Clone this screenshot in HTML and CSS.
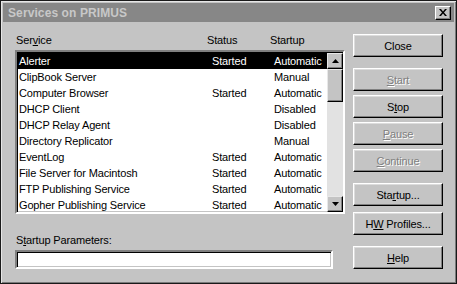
FILE: index.html
```html
<!DOCTYPE html>
<html lang="en">
<head>
  <meta charset="UTF-8">
  <title>Services on PRIMUS</title>
  <link rel="stylesheet" href="styles.css">
</head>
<body>
  <div class="window">
    <div class="titlebar">
      <span class="title">Services on PRIMUS</span>
      <span class="close-box">
        <svg width="8" height="7" viewBox="0 0 8 7">
          <path d="M0 0h2l2 2.5L6 0h2L5 3.5 8 7H6L4 4.5 2 7H0l3-3.5z" fill="#000"/>
        </svg>
      </span>
    </div>

    <div class="content">
      <div class="main">
        <div class="headers">
          <span>Ser<u>v</u>ice</span>
          <span>Status</span>
          <span>Startup</span>
        </div>

        <div class="listbox">
          <div class="rows">
            <div class="row selected"><span>Alerter</span><span>Started</span><span>Automatic</span></div>
            <div class="row"><span>ClipBook Server</span><span></span><span>Manual</span></div>
            <div class="row"><span>Computer Browser</span><span>Started</span><span>Automatic</span></div>
            <div class="row"><span>DHCP Client</span><span></span><span>Disabled</span></div>
            <div class="row"><span>DHCP Relay Agent</span><span></span><span>Disabled</span></div>
            <div class="row"><span>Directory Replicator</span><span></span><span>Manual</span></div>
            <div class="row"><span>EventLog</span><span>Started</span><span>Automatic</span></div>
            <div class="row"><span>File Server for Macintosh</span><span>Started</span><span>Automatic</span></div>
            <div class="row"><span>FTP Publishing Service</span><span>Started</span><span>Automatic</span></div>
            <div class="row"><span>Gopher Publishing Service</span><span>Started</span><span>Automatic</span></div>
          </div>
          <div class="scrollbar">
            <div class="sb-btn">
              <svg width="7" height="4" viewBox="0 0 7 4"><path d="M3.5 0L7 4H0z" fill="#000"/></svg>
            </div>
            <div class="sb-track">
              <div class="sb-thumb"></div>
            </div>
            <div class="sb-btn">
              <svg width="7" height="4" viewBox="0 0 7 4"><path d="M0 0h7L3.5 4z" fill="#000"/></svg>
            </div>
          </div>
        </div>

        <div class="param-label">S<u>t</u>artup Parameters:</div>
        <div class="param-input"></div>
      </div>

      <div class="buttons">
        <div class="btn first"><span>Close</span></div>
        <div class="btn disabled spaced"><span><u>S</u>tart</span></div>
        <div class="btn"><span>S<u>t</u>op</span></div>
        <div class="btn disabled"><span><u>P</u>ause</span></div>
        <div class="btn disabled"><span><u>C</u>ontinue</span></div>
        <div class="btn spaced"><span>Sta<u>r</u>tup...</span></div>
        <div class="btn near"><span>H<u>W</u> Profiles...</span></div>
        <div class="btn spaced"><span><u>H</u>elp</span></div>
      </div>
    </div>
  </div>
</body>
</html>
```

FILE: styles.css
```css
body {
  margin: 0;
  background: #c4c4c4;
  font-family: "Liberation Sans", Arial, sans-serif;
  font-size: 11px;
  letter-spacing: -0.15px;
  color: #000;
}

.window {
  width: 457px;
  height: 284px;
  box-sizing: border-box;
  border: 1px solid #1a1a1a;
  box-shadow: inset 1px 1px #e6e6e6, inset -1px -1px #7a7a7a;
  padding: 2px;
  background: #c4c4c4;
}

.titlebar {
  height: 19px;
  background: #878787;
  display: flex;
  align-items: center;
  justify-content: space-between;
  padding: 0 3px 0 5px;
}

.title {
  font-weight: bold;
  font-size: 12px;
  letter-spacing: 0.1px;
  color: #c8c8c8;
}

.close-box {
  width: 16px;
  height: 14px;
  box-sizing: border-box;
  background: #c4c4c4;
  border: 1px solid;
  border-color: #fff #000 #000 #fff;
  box-shadow: inset -1px -1px #808080;
  display: flex;
  align-items: center;
  justify-content: center;
}

.content {
  display: flex;
  gap: 8px;
  padding: 11px 0 0 12px;
}

.main {
  width: 330px;
}

.headers {
  display: grid;
  grid-template-columns: 191px 63px auto;
  padding-left: 1px;
  line-height: 14px;
  margin-bottom: 3px;
}

.listbox {
  display: flex;
  height: 164px;
  box-sizing: border-box;
  border: 2px solid;
  border-color: #808080 #fff #fff #808080;
  box-shadow: inset 1px 1px #000, inset -1px -1px #c4c4c4;
  background: #fff;
  padding: 1px 0 0 1px;
}

.rows {
  flex: 1;
}

.row {
  display: grid;
  grid-template-columns: 193px 62px auto;
  padding-left: 1px;
  height: 16px;
  line-height: 16px;
  white-space: nowrap;
}

.row.selected {
  background: #000;
  color: #fff;
}

.scrollbar {
  width: 16px;
  display: flex;
  flex-direction: column;
}

.sb-btn,
.sb-thumb {
  box-sizing: border-box;
  background: #c4c4c4;
  border: 1px solid;
  border-color: #e8e8e8 #000 #000 #e8e8e8;
  box-shadow: inset -1px -1px #808080;
}

.sb-btn {
  height: 16px;
  display: flex;
  align-items: center;
  justify-content: center;
}

.sb-track {
  flex: 1;
  background: #e2e2e2;
}

.sb-thumb {
  height: 33px;
}

.param-label {
  line-height: 14px;
  margin-top: 19px;
  padding-left: 1px;
}

.param-input {
  width: 318px;
  height: 19px;
  margin-top: 3px;
  box-sizing: border-box;
  border: 2px solid;
  border-color: #808080 #fff #fff #808080;
  box-shadow: inset 1px 1px #000, inset -1px -1px #c4c4c4;
  background: #fff;
}

.buttons {
  display: flex;
  flex-direction: column;
  gap: 4px;
  width: 90px;
}

.btn {
  height: 23px;
  box-sizing: border-box;
  border: 1px solid;
  border-color: #fff #000 #000 #fff;
  box-shadow: inset -1px -1px #808080, inset 1px 1px #dcdcdc;
  display: flex;
  align-items: center;
  justify-content: center;
  white-space: nowrap;
}

.btn.first {
  margin-top: 1px;
}

.btn.spaced {
  margin-top: 7px;
}

.btn.near {
  margin-top: 2px;
}

.btn.disabled {
  color: #808080;
  text-shadow: 1px 1px #fff;
}
```
